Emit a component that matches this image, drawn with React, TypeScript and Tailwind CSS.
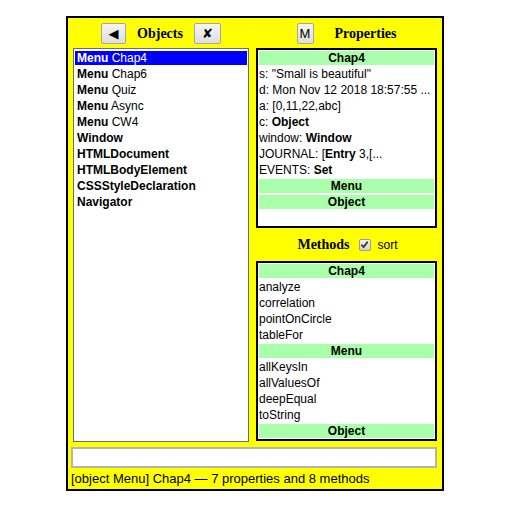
import React from 'react';

const objects: [string, string][] = [
  ['Menu', 'Chap4'],
  ['Menu', 'Chap6'],
  ['Menu', 'Quiz'],
  ['Menu', 'Async'],
  ['Menu', 'CW4'],
  ['Window', ''],
  ['HTMLDocument', ''],
  ['HTMLBodyElement', ''],
  ['CSSStyleDeclaration', ''],
  ['Navigator', ''],
];

const methods: { group?: string; name?: string }[] = [
  { group: 'Chap4' },
  { name: 'analyze' },
  { name: 'correlation' },
  { name: 'pointOnCircle' },
  { name: 'tableFor' },
  { group: 'Menu' },
  { name: 'allKeysIn' },
  { name: 'allValuesOf' },
  { name: 'deepEqual' },
  { name: 'toString' },
  { group: 'Object' },
];

function Btn({ children, w }: { children: React.ReactNode; w: string }) {
  return (
    <button
      className={`${w} h-[21px] flex items-center justify-center rounded-[2px] border border-[#a6a6a6] bg-gradient-to-b from-[#f6f6f6] to-[#dedede] text-black text-[13px] leading-none`}
    >
      {children}
    </button>
  );
}

function Group({ label }: { label: string }) {
  return (
    <div className="h-4 py-px bg-[#aaffaa] bg-clip-content text-center font-bold leading-[14px]">
      {label}
    </div>
  );
}

function Row({ children }: { children: React.ReactNode }) {
  return <div className="h-4 leading-4 whitespace-nowrap">{children}</div>;
}

export default function App() {
  return (
    <div className="min-h-screen bg-white pt-4" style={{ fontFamily: '"Liberation Sans", Arial, sans-serif' }}>
      <div className="mx-auto ml-[66px] w-[378px] h-[475px] bg-[#ffff00] border-2 border-black flex flex-col px-[5px] text-black">
        <div className="flex gap-[7px]">
          {/* left column */}
          <div className="w-[176px] flex flex-col">
            <div className="h-[30px] flex items-center justify-center gap-[11px] pt-[1px]">
              <Btn w="w-[25px]">
                <span className="text-[13px]" style={{ fontFamily: '"DejaVu Sans", sans-serif' }}>◀</span>
              </Btn>
              <span className="text-[14px] font-bold" style={{ fontFamily: '"Liberation Serif", serif' }}>Objects</span>
              <Btn w="w-[27px]">
                <span className="text-[13px] font-bold" style={{ fontFamily: '"DejaVu Sans", sans-serif' }}>✘</span>
              </Btn>
            </div>
            <div className="h-[394px] bg-white border border-[#5b6f91] p-px text-[12px]">
              {objects.map(([kind, name], i) => (
                <div
                  key={i}
                  className={`h-4 py-px px-[2px] leading-[14px] whitespace-nowrap bg-clip-padding ${i === 0 ? 'text-white' : ''}`}
                >
                  <div className={i === 0 ? 'bg-[#0000ff] -mx-[2px] px-[2px]' : ''}>
                    <b>{kind}</b>
                    {name && ' ' + name}
                  </div>
                </div>
              ))}
            </div>
          </div>

          {/* right column */}
          <div className="w-[181px] flex flex-col">
            <div className="h-[30px] flex items-center justify-center gap-[21px] pt-[1px]">
              <Btn w="w-[17px]">M</Btn>
              <span className="text-[14px] font-bold" style={{ fontFamily: '"Liberation Serif", serif' }}>Properties</span>
            </div>
            <div className="h-[180px] bg-white border-2 border-black px-px text-[12px] overflow-hidden">
              <Group label="Chap4" />
              <Row>s: "Small is beautiful"</Row>
              <Row>d: Mon Nov 12 2018 18:57:55 ...</Row>
              <Row>a: [0,11,22,abc]</Row>
              <Row>
                c: <b>Object</b>
              </Row>
              <Row>
                window: <b>Window</b>
              </Row>
              <Row>
                JOURNAL: [<b>Entry</b> 3,[...
              </Row>
              <Row>
                EVENTS: <b>Set</b>
              </Row>
              <Group label="Menu" />
              <Group label="Object" />
            </div>
            <div className="h-[33px] flex items-center justify-center pl-[2px]">
              <span className="text-[14px] font-bold" style={{ fontFamily: '"Liberation Serif", serif' }}>Methods</span>
              <span className="ml-[9px] w-[12px] h-[12px] rounded-[2px] border border-[#9a9a9a] bg-gradient-to-b from-[#f4f4f4] to-[#d4d4d4] flex items-center justify-center">
                <svg width="9" height="9" viewBox="0 0 10 10">
                  <path d="M1.5 5.2 L4 7.8 L8.6 1.8" fill="none" stroke="#3a3a3a" strokeWidth="2" />
                </svg>
              </span>
              <span className="ml-[7px] text-[12px]">sort</span>
            </div>
            <div className="h-[180px] bg-white border-2 border-black px-px text-[12px] overflow-hidden">
              {methods.map((m, i) =>
                m.group ? <Group key={i} label={m.group} /> : <Row key={i}>{m.name}</Row>
              )}
            </div>
          </div>
        </div>

        <input
          className="mt-[5px] ml-[-2px] w-[366px] h-[21px] bg-white border-2 border-[#b4b4b4] outline-none"
          readOnly
        />
        <div className="mt-[3px] ml-[-2px] text-[13px] leading-4 whitespace-nowrap">
          [object Menu] Chap4 — 7 properties and 8 methods
        </div>
      </div>
    </div>
  );
}
